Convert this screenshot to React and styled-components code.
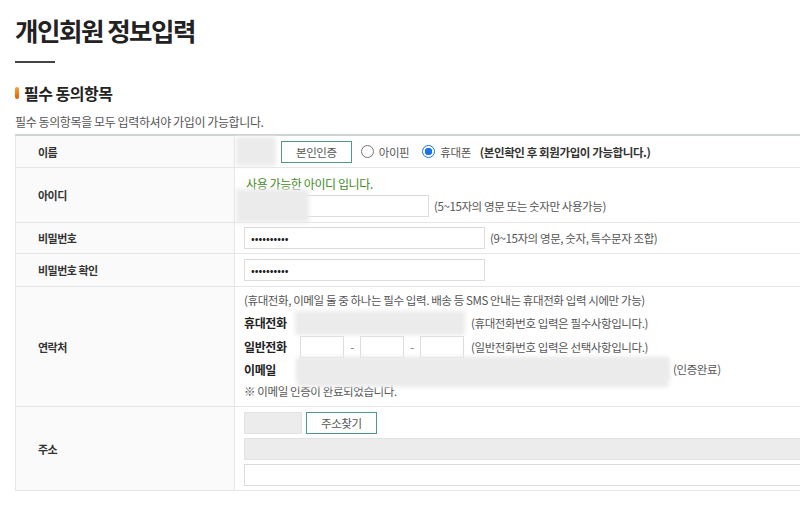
import React from "react";
import styled, { createGlobalStyle } from "styled-components";

const GlobalStyle = createGlobalStyle`
  body {
    margin: 0;
    background: #fff;
    color: #333;
    font-family: "Noto Sans CJK KR", "Noto Sans", sans-serif;
    overflow: hidden;
  }
  input {
    font-family: inherit;
  }
`;

const Page = styled.div`
  padding: 12px 0 0 15px;
  width: 820px;
`;

const Title = styled.h1`
  margin: 0;
  font-size: 25.5px;
  line-height: 36px;
  font-weight: 700;
  letter-spacing: -1.5px;
  color: #222;
`;

const TitleBar = styled.div`
  width: 40px;
  height: 2px;
  margin-top: 13px;
  background: #444;
`;

const SectionTitle = styled.h2`
  display: flex;
  align-items: center;
  gap: 5px;
  margin: 19px 0 0;
  font-size: 16px;
  line-height: 22px;
  font-weight: 700;
  letter-spacing: -0.5px;
  color: #222;
`;

const Pill = styled.span`
  width: 4px;
  height: 12px;
  border-radius: 2px;
  background: linear-gradient(#f9a23a, #e25c00);
`;

const Desc = styled.p`
  margin: 10px 0 0;
  font-size: 12px;
  line-height: 16px;
  letter-spacing: -0.4px;
  color: #555;
`;

const Table = styled.div`
  margin-top: 4px;
  border-top: 2px solid #cfd3d2;
  display: grid;
  grid-template-columns: 220px 1fr;
`;

const Label = styled.div`
  display: flex;
  align-items: center;
  min-height: ${(p) => p.h}px;
  padding-left: 22px;
  background: #fafafa;
  border-left: 1px solid #e6e6e6;
  border-right: 1px solid #e6e6e6;
  border-bottom: 1px solid #e6e6e6;
  font-size: 11px;
  font-weight: 700;
  letter-spacing: -0.5px;
  color: #333;
  box-sizing: border-box;
`;

const Cell = styled.div`
  display: flex;
  flex-direction: column;
  justify-content: ${(p) => (p.top ? "flex-start" : "center")};
  gap: ${(p) => p.gap || 0}px;
  padding: ${(p) => p.pad || "0 0 0 9px"};
  border-bottom: 1px solid #e6e6e6;
  font-size: 11.5px;
  letter-spacing: -0.4px;
  color: #555;
  box-sizing: border-box;
`;

const Line = styled.div`
  display: flex;
  align-items: center;
  gap: ${(p) => p.gap ?? 5}px;
  height: ${(p) => p.h || 22}px;
  white-space: nowrap;
`;

const Redact = styled.div`
  flex: none;
  width: ${(p) => p.w}px;
  height: ${(p) => p.h}px;
  margin-left: ${(p) => p.ml || 0}px;
  background: #ebebeb;
  filter: blur(2px);
`;

const Overlay = styled(Redact)`
  position: absolute;
  left: ${(p) => p.x}px;
  top: ${(p) => p.y}px;
  margin: 0;
`;

const Field = styled.input`
  flex: none;
  width: ${(p) => p.w}px;
  height: 22px;
  box-sizing: border-box;
  margin: 0;
  padding: 0 6px;
  border: 1px solid ${(p) => (p.disabled ? "#e2e2e2" : "#dcdcdc")};
  background: ${(p) => (p.disabled ? "#ececec" : "#fff")};
  font-size: 11px;
  color: #222;
  outline: none;
`;

const Relative = styled.div`
  position: relative;
  display: flex;
  align-items: center;
  margin-left: ${(p) => p.ml || 0}px;
`;

const OutlineButton = styled.button`
  flex: none;
  height: 22px;
  padding: 0 14px;
  margin: 0;
  border: 1px solid #4f9a84;
  background: #fff;
  font-family: inherit;
  font-size: 11.5px;
  letter-spacing: -0.4px;
  color: #555;
`;

const Radio = styled.span`
  flex: none;
  width: 13px;
  height: 13px;
  box-sizing: border-box;
  border-radius: 50%;
  border: 1px solid ${(p) => (p.checked ? "#1a73e8" : "#767676")};
  margin-left: ${(p) => p.ml || 3}px;
  background: ${(p) =>
    p.checked ? "radial-gradient(circle, #1a73e8 0 3.5px, #fff 4px)" : "#fff"};
`;

const Strong = styled.span`
  font-weight: 700;
  color: #333;
  margin-left: ${(p) => p.ml || 0}px;
`;

const Ok = styled.span`
  color: #3f8a25;
  font-size: 12px;
`;

const SubLabel = styled.span`
  flex: none;
  width: ${(p) => p.w}px;
  font-weight: 700;
  font-size: 12px;
  color: #222;
`;

const Dash = styled.span`
  width: 16px;
  text-align: center;
  color: #777;
`;

const Hint = styled.span`
  margin-left: ${(p) => p.ml || 0}px;
`;

export default function App() {
  return (
    <Page>
      <GlobalStyle />
      <Title>개인회원 정보입력</Title>
      <TitleBar />
      <SectionTitle>
        <Pill />
        필수 동의항목
      </SectionTitle>
      <Desc>필수 동의항목을 모두 입력하셔야 가입이 가능합니다.</Desc>

      <Table>
        <Label h={32}>이름</Label>
        <Cell>
          <Line gap={5}>
            <Redact w={40} h={29} ml={-8} />
            <OutlineButton>본인인증</OutlineButton>
            <Radio ml={4} />
            <span>아이핀</span>
            <Radio checked ml={8} />
            <span>휴대폰</span>
            <Strong ml={4}>(본인확인 후 회원가입이 가능합니다.)</Strong>
          </Line>
        </Cell>

        <Label h={55}>아이디</Label>
        <Cell top pad="6px 0 0 11px" gap={3}>
          <Line h={18}>
            <Ok>사용 가능한 아이디 입니다.</Ok>
          </Line>
          <Line>
            <Relative ml={-2}>
              <Field w={185} />
              <Overlay w={73} h={34} x={-8} y={-6} />
            </Relative>
            <span>(5~15자의 영문 또는 숫자만 사용가능)</span>
          </Line>
        </Cell>

        <Label h={31}>비밀번호</Label>
        <Cell>
          <Line>
            <Field w={241} type="password" value="1234567890" readOnly />
            <span>(9~15자의 영문, 숫자, 특수문자 조합)</span>
          </Line>
        </Cell>

        <Label h={33}>비밀번호 확인</Label>
        <Cell>
          <Line>
            <Field w={241} type="password" value="1234567890" readOnly />
          </Line>
        </Cell>

        <Label h={120}>연락처</Label>
        <Cell top pad="3px 0 0 9px">
          <Line h={20}>
            (휴대전화, 이메일 둘 중 하나는 필수 입력. 배송 등 SMS 안내는 휴대전화 입력 시에만 가능)
          </Line>
          <Line h={25} gap={6}>
            <SubLabel w={45}>휴대전화</SubLabel>
            <Redact w={170} h={24} />
            <span>(휴대전화번호 입력은 필수사항입니다.)</span>
          </Line>
          <Line h={23} gap={0}>
            <SubLabel w={56}>일반전화</SubLabel>
            <Field w={44} />
            <Dash>-</Dash>
            <Field w={44} />
            <Dash>-</Dash>
            <Field w={44} />
            <Hint ml={7}>(일반전화번호 입력은 선택사항입니다.)</Hint>
          </Line>
          <Line h={22} gap={4}>
            <SubLabel w={49}>이메일</SubLabel>
            <Relative>
              <Redact w={372} h={21} />
              <Overlay w={372} h={30} x={0} y={-2} />
            </Relative>
            <span>(인증완료)</span>
          </Line>
          <Line h={22}>※ 이메일 인증이 완료되었습니다.</Line>
        </Cell>

        <Label h={84}>주소</Label>
        <Cell gap={4} pad="0 0 0 9px">
          <Line gap={4}>
            <Field w={58} disabled />
            <OutlineButton>주소찾기</OutlineButton>
          </Line>
          <Field w={575} disabled />
          <Field w={575} />
        </Cell>
      </Table>
    </Page>
  );
}
